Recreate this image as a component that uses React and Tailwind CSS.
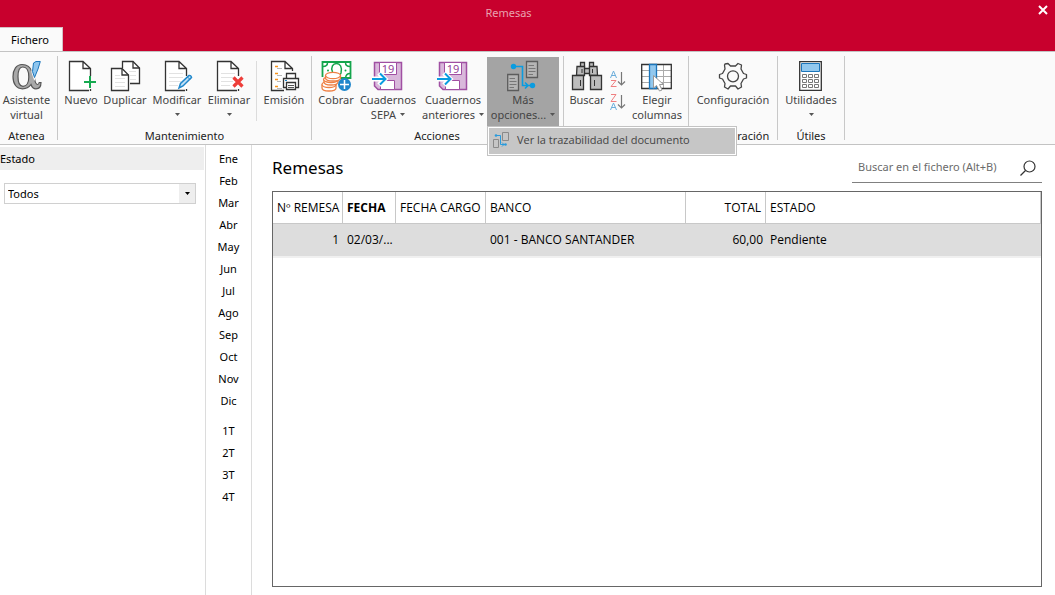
import React from "react";

const Svg = ({ children }) => (
  <svg width="32" height="32" viewBox="0 0 32 32" fill="none" className="shrink-0" aria-hidden="true">
    {children}
  </svg>
);

const DocShape = ({ lines }) => (
  <g>
    <path d="M4.500 1.500H18L25.500 9V30.500H4.500Z" fill="#fff" />
    <path d="M25.500 16V8.500L18 1.500H4.500V30.500H24M18 1.500V8.500H25.500M25.500 29V31" stroke="#333" strokeWidth="1.300" />
    {lines && <path d="M8 13.500H22M8 17.500H22M8 21.500H20M8 25.500H17" stroke="#e2e2e2" />}
  </g>
);

const AssistantIcon = () => (
  <Svg>
    <path
      fillRule="evenodd"
      d="M11 4.500C16 4.500 19.500 7 21 12L22.500 5H27C26 11 24.500 15.500 23.500 18C24 22 24.800 24.500 26.500 24.500C27.800 24.500 28 23.500 28.200 22.500H30C30 26.500 28 28.800 25 28.800C22.500 28.800 20.800 27 20 24.500C18 27.300 15 28.800 11.500 28.800C5.500 28.800 2 24 2 16.800C2 9.500 5.500 4.500 11 4.500ZM11.800 7C8.500 7 7 10.500 7 16.500C7 22.500 8.500 26.300 12 26.300C15.500 26.300 17.800 22.500 17.800 17C17.800 10.500 15.500 7 11.800 7Z"
      fill="#a9a9a9"
      stroke="#555"
      strokeWidth="1.200"
    />
    <path d="M22.500 3L25 1.500H29.300L27 9L23.500 17.500L21.500 11.500Z" fill="#8fc6ee" stroke="#fafafa" strokeWidth="2.500" />
    <path d="M22.500 3L25 1.500H29.300L27 9L23.500 17.500L21.500 11.500Z" fill="#8fc6ee" stroke="#1c76bb" />
  </Svg>
);

const NewIcon = () => (
  <Svg>
    <DocShape />
    <path d="M25 16V28M19 22H31" stroke="#16a94f" strokeWidth="2" />
  </Svg>
);

const DuplicateIcon = () => (
  <Svg>
    <path d="M13.500 8V1.500H24L30.500 8V23.500H21" fill="#fff" stroke="#333" strokeWidth="1.300" />
    <path d="M24 1.500V8H30.500" stroke="#333" strokeWidth="1.300" />
    <path d="M20 11.500H27M21 15.500H27M21 19.500H27" stroke="#e2e2e2" />
    <path d="M2.500 8.500H13L19.500 15V30.500H2.500Z" fill="#fff" stroke="#333" strokeWidth="1.300" />
    <path d="M13 8.500V15H19.500" stroke="#333" strokeWidth="1.300" />
    <path d="M6 15.500H11M6 18.500H16M6 22.500H16M6 26.500H16" stroke="#e2e2e2" />
  </Svg>
);

const EditIcon = () => (
  <Svg>
    <DocShape lines />
    <path d="M18 28L19.500 23.500L28 15.500Q30 15 30.500 17.500L22 26Z" fill="#bfdff5" stroke="#2087cb" strokeWidth="1.500" />
    <path d="M26.500 17L29 19.500" stroke="#2087cb" />
  </Svg>
);

const DeleteIcon = () => (
  <Svg>
    <DocShape lines />
    <path d="M20.500 17.500L29.500 26.500M29.500 17.500L20.500 26.500" stroke="#ee3e3a" strokeWidth="3.200" />
  </Svg>
);

const PrintIcon = () => (
  <Svg>
    <path d="M3.500 1.500H17L24.500 8.500V14H16V30.500H3.500Z" fill="#fff" />
    <path d="M16 30.500H3.500V1.500H17L24.500 8.500V11M17 1.500V8.500H24.500" stroke="#333" strokeWidth="1.300" />
    <path d="M7 6.500H10M7 13.500H10M7 19.500H10M7 26.500H10" stroke="#f7941d" strokeWidth="1.500" />
    <path d="M9 8.500H14M9 15.500H14M9 21.500H13M9 28.500H14" stroke="#b9b9b9" />
    <path d="M18.500 19V13.500H27.500V19" fill="#fff" stroke="#333" strokeWidth="1.300" />
    <path d="M15.500 18.500H30.500V27.500H15.500Z" fill="#fff" stroke="#333" strokeWidth="1.300" />
    <path d="M18.500 22.500H27.500V29.500H18.500Z" fill="#fff" stroke="#333" strokeWidth="1.300" />
    <path d="M20 25.500H26M20 27.500H26" stroke="#555" />
    <path d="M17 20.500H19" stroke="#2087cb" />
  </Svg>
);

const CashIcon = () => (
  <Svg>
    <path d="M2.500 17V2H30.500V18H19" fill="#fff" stroke="#14a54c" strokeWidth="1.800" />
    <path d="M3 6.500Q7.500 6.500 7.500 2.500M25.500 2.500Q25.500 6.500 30 6.500M30 13.500Q26 13.500 25.500 18" stroke="#14a54c" strokeWidth="1.500" />
    <path d="M12.500 12C10.500 7 13 3.500 16.500 3.500S22.500 7 21 13L19.500 16" stroke="#14a54c" strokeWidth="1.500" />
    <circle cx="8" cy="10.500" r="1" fill="#14a54c" />
    <circle cx="25.500" cy="10.500" r="1" fill="#14a54c" />
    <g fill="#fff" stroke="#ee8045" strokeWidth="1.300">
      <path d="M2 24.500V28C2 32 16 32 16 28V24.500" />
      <ellipse cx="9" cy="24.500" rx="7" ry="3" />
      <path d="M4 19.500V22C4 26 18 26 18 22V19.500" />
      <ellipse cx="11" cy="19.500" rx="7.500" ry="3" />
      <path d="M5.500 15.500V18C5.500 22 20.500 22 20.500 18V15.500" />
      <ellipse cx="13" cy="15.500" rx="7.500" ry="3.200" />
    </g>
    <circle cx="24.500" cy="24.500" r="6.500" fill="#2087cb" />
    <path d="M24.500 20V29M20 24.500H29" stroke="#fff" strokeWidth="1.500" />
  </Svg>
);

const LedgerIcon = () => (
  <Svg>
    <path d="M2.500 2.500H29.500V29.500H6L2.500 26Z" fill="#d9b8db" stroke="#a04fa2" strokeWidth="1.500" />
    <path d="M7.500 2.500H24.500V14.500H7.500Z" fill="#fff" stroke="#a04fa2" />
    <path d="M8.500 20.500H22.500V29.500H8.500Z" fill="#fff" stroke="#a04fa2" />
    <path d="M0 19H12M7 13L13 19L7 25" stroke="#fff" strokeWidth="5" />
    <text x="16" y="12.500" textAnchor="middle" fontSize="11" fontFamily="Noto Sans, sans-serif" fill="#93439a">19</text>
    <path d="M0 19H13M8 13.500L13.500 19L8 24.500" stroke="#0a9ce0" strokeWidth="2" />
  </Svg>
);

const TraceIcon = () => (
  <Svg>
    <g fill="#b5b5b5" stroke="#5c5c5c" strokeWidth="1.300">
      <path d="M0.700 14.500H11.500V30.500H0.700Z" />
      <path d="M19.500 1.500H30.500V17.500H19.500Z" />
    </g>
    <path d="M2.500 18.500H8M2.500 21.500H9.500M2.500 24.500H9.500M2.500 27.500H7M21.500 5.500H27M21.500 8.500H28.500M21.500 11.500H28.500M21.500 14.500H26" stroke="#777" />
    <path d="M6 6.500H15.500V25.500H25M18 22.500L21 25.500L18 28.500" stroke="#0a9ce0" strokeWidth="1.600" />
    <circle cx="6.500" cy="6.500" r="2.700" fill="#0a9ce0" />
    <circle cx="25.500" cy="25.500" r="2.700" fill="#0a9ce0" />
  </Svg>
);

const TraceSmallIcon = () => (
  <svg width="16" height="16" viewBox="0 0 16 16" fill="none" className="shrink-0" aria-hidden="true">
    <path d="M0.500 7.500H5.500V15.500H0.500ZM9.500 0.500H15.500V8.500H9.500Z" stroke="#8a8a8a" />
    <path d="M3 3.500H7.500V12.500H12M9 10.500L11 12.500L9 14.500" stroke="#2a9bdc" />
    <circle cx="3" cy="3.500" r="1.300" fill="#2a9bdc" />
    <circle cx="12.500" cy="12.500" r="1.300" fill="#2a9bdc" />
  </svg>
);

const BinocularsIcon = () => (
  <Svg>
    <g fill="#bdbdbd" stroke="#333" strokeWidth="1.300">
      <path d="M9.500 2.500H13.500V7H9.500ZM18.500 2.500H22.500V7H18.500ZM13 8.500H19V13.500H13Z" />
      <path d="M6 6.500H13.500V15.500H5.500ZM18.500 6.500H26L26.500 15.500H18.500Z" />
      <path d="M1.500 15.500H12.500V29.500H1.500ZM19.500 15.500H30.500V29.500H19.500Z" />
    </g>
    <path d="M9.500 20V26M23.500 20V26M11 9V13M21.500 9V13" stroke="#333" />
  </Svg>
);

const SortIcon = ({ descending }) => (
  <svg width="16" height="18" viewBox="0 0 16 18" fill="none" aria-hidden="true">
    <path d={descending ? "M0.500 17L3.500 10L6.500 17M1.500 14.500H5.500" : "M0.500 8L3.500 1L6.500 8M1.500 5.500H5.500"} stroke="#6caedb" />
    <path d={descending ? "M1 1.500H6L1 8.500H6.500" : "M1 10.500H6L1 16.500H6.500"} stroke="#ef7f80" />
    <path d="M11.500 2V15M8 11.500L11.500 15L15 11.500" stroke="#777" strokeWidth="1.200" />
  </svg>
);

const ColumnsIcon = () => (
  <Svg>
    <path d="M1 4.500H30V28.500H1Z" fill="#fff" />
    <path d="M1 10.500H30M1 16.500H30M1 22.500H30M15.500 4V28M22.500 4V28" stroke="#ababab" />
    <path d="M0.700 4.500H30.300V28.500H0.700Z" stroke="#333" strokeWidth="1.300" />
    <path d="M8.500 4.500H15.500V28.500H8.500Z" fill="#92c8ee" stroke="#1c76bb" strokeWidth="1.300" />
    <path d="M12.500 15.500V28L15.500 25.500L18.500 31L21 30L18.500 24.500H22.500Z" fill="#fff" stroke="#999" />
  </Svg>
);

const GearIcon = () => (
  <Svg>
    <g stroke="#444" strokeWidth="1.300" strokeLinejoin="round">
      <path d="M8 4L11 3.500L13.500 6H18.500L21 3.500L24.500 5L24 9L26.500 13.500L29.500 14.500V18L26.500 19L24 23.500L24.500 27L21 29L18.500 26H13.500L11 29L7.500 27L8 23.500L5.500 19L2.500 18V14.500L5.500 13.500L8 9L7.500 5Z" />
      <circle cx="16" cy="16.300" r="5.500" />
    </g>
  </Svg>
);

const CalculatorIcon = () => (
  <Svg>
    <path d="M4.700 1.700H26.300V30.300H4.700Z" fill="#fff" stroke="#333" strokeWidth="1.300" />
    <path d="M6.500 3.500H24.500V11.500H6.500Z" fill="#92c8ee" stroke="#1c76bb" />
    <path d="M7.500 14.500H11.500V17.500H7.500ZM13.500 14.500H17.500V17.500H13.500ZM19.500 14.500H23.500V17.500H19.500ZM7.500 19.500H11.500V22.500H7.500ZM13.500 19.500H17.500V22.500H13.500ZM19.500 19.500H23.500V22.500H19.500ZM7.500 24.500H11.500V27.500H7.500ZM13.500 24.500H17.500V27.500H13.500ZM19.500 24.500H23.500V27.500H19.500Z" stroke="#777" />
  </Svg>
);

const Caret = () => (
  <svg width="5" height="3" viewBox="0 0 5 3" className="shrink-0" aria-hidden="true">
    <path d="M0 0H5L2.500 3Z" fill="#555" />
  </svg>
);

function RibbonButton({ icon, label, second, caret, width, active }) {
  return (
    <button
      type="button"
      className={`${width} ${active ? "bg-[#a4a4a4]" : ""} flex h-[69px] shrink-0 flex-col items-center pt-[3px] leading-[15px] whitespace-nowrap text-[#444]`}
    >
      {icon}
      <span>{label}</span>
      <span className="flex h-[15px] items-center gap-1">
        {second}
        {caret && <Caret />}
      </span>
    </button>
  );
}

function Group({ title, className, children }) {
  return (
    <section className={`${className} flex h-[84px] shrink-0 flex-col border-r border-[#c8c8c8]`}>
      <div className="flex pt-px">{children}</div>
      <h2 className="mt-0.5 text-center leading-4 text-[#222]">{title}</h2>
    </section>
  );
}

function Ribbon() {
  return (
    <div className="flex h-[94px] border-t border-b border-[#c3c3c3] bg-[#fafafa] pt-1">
      <Group title="Atenea" className="pr-1">
        <RibbonButton icon={<AssistantIcon />} label="Asistente" second="virtual" width="w-[53px]" />
      </Group>
      <Group title="Mantenimiento" className="px-[3px]">
        <RibbonButton icon={<NewIcon />} label="Nuevo" width="w-10" />
        <RibbonButton icon={<DuplicateIcon />} label="Duplicar" width="w-12" />
        <RibbonButton icon={<EditIcon />} label="Modificar" caret width="w-14" />
        <RibbonButton icon={<DeleteIcon />} label="Eliminar" caret width="w-12" />
        <div className="mx-[3px] mt-1 h-[60px] w-px bg-[#dcdcdc]" />
        <RibbonButton icon={<PrintIcon />} label="Emisión" width="w-12" />
      </Group>
      <Group title="Acciones" className="pr-1 pl-[3px]">
        <RibbonButton icon={<CashIcon />} label="Cobrar" width="w-[42px]" />
        <RibbonButton icon={<LedgerIcon />} label="Cuadernos" second="SEPA" caret width="w-[62px]" />
        <RibbonButton icon={<LedgerIcon />} label="Cuadernos" second="anteriores" caret width="w-[68px]" />
        <div className="relative">
          <RibbonButton icon={<TraceIcon />} label="Más" second="opciones..." caret active width="w-[72px]" />
          <div role="menu" className="absolute top-full left-0 z-10 w-[250px] border border-[#c3c3c3] bg-white p-px">
            <button type="button" role="menuitem" className="flex h-[26px] w-full items-start gap-2 bg-[#c6c6c6] pt-1 pl-1 font-['Open_Sans','Noto_Sans',sans-serif] text-[11px] leading-4 whitespace-nowrap text-[#444]">
              <TraceSmallIcon />
              Ver la trazabilidad del documento
            </button>
          </div>
        </div>
      </Group>
      <Group className="px-[3px]">
        <RibbonButton icon={<BinocularsIcon />} label="Buscar" width="w-10" />
        <div className="flex w-[22px] flex-col items-center gap-[5px] pt-[13px]">
          <button type="button" aria-label="Orden ascendente"><SortIcon /></button>
          <button type="button" aria-label="Orden descendente"><SortIcon descending /></button>
        </div>
        <RibbonButton icon={<ColumnsIcon />} label="Elegir" second="columnas" width="w-14" />
      </Group>
      <Group title="Configuración">
        <RibbonButton icon={<GearIcon />} label="Configuración" width="w-[88px]" />
      </Group>
      <Group title="Útiles">
        <RibbonButton icon={<CalculatorIcon />} label="Utilidades" caret width="w-[66px]" />
      </Group>
    </div>
  );
}

const months = ["Ene", "Feb", "Mar", "Abr", "May", "Jun", "Jul", "Ago", "Sep", "Oct", "Nov", "Dic"];
const quarters = ["1T", "2T", "3T", "4T"];

const PeriodList = ({ items }) => (
  <div className="flex flex-col">
    {items.map((item) => (
      <button key={item} type="button" className="h-[22px] text-center">{item}</button>
    ))}
  </div>
);

function RemesasTable() {
  const th = "border-r border-b border-[#c8c8c8] px-1 whitespace-nowrap";
  return (
    <table className="w-full table-fixed border-separate border-spacing-0 font-['Open_Sans','Noto_Sans',sans-serif] text-xs">
      <colgroup>
        <col className="w-[70px]" />
        <col className="w-[53px]" />
        <col className="w-[90px]" />
        <col className="w-[200px]" />
        <col className="w-[80px]" />
        <col />
      </colgroup>
      <thead>
        <tr className="h-8 text-left">
          <th className={`${th} text-right font-normal`}>Nº REMESA</th>
          <th className={`${th} font-bold`}>FECHA</th>
          <th className={`${th} font-normal`}>FECHA CARGO</th>
          <th className={`${th} font-normal`}>BANCO</th>
          <th className={`${th} text-right font-normal`}>TOTAL</th>
          <th className={`${th} font-normal`}>ESTADO</th>
        </tr>
      </thead>
      <tbody>
        <tr className="h-8 bg-[#ddd]">
          <td className="px-1 text-right">1</td>
          <td className="px-1 whitespace-nowrap">02/03/...</td>
          <td />
          <td className="px-1">001 - BANCO SANTANDER</td>
          <td className="pr-[3px] text-right">60,00</td>
          <td className="px-1">Pendiente</td>
        </tr>
      </tbody>
    </table>
  );
}

export default function App() {
  return (
    <div className="flex min-h-screen flex-col bg-white font-['Noto_Sans','Open_Sans',sans-serif] text-[11px] text-black">
      <header className="bg-[#c8002d]">
        <div className="flex h-[27px] items-center">
          <h1 className="flex-1 text-center text-[#e9a3b0]">Remesas</h1>
          <button type="button" aria-label="Cerrar" className="mr-1.5 mb-2 ml-5 flex size-3 items-center justify-center">
            <svg width="10" height="10" viewBox="0 0 10 10" aria-hidden="true">
              <path d="M1 1L9 9M9 1L1 9" stroke="#fff" strokeWidth="2" />
            </svg>
          </button>
        </div>
        <nav className="flex">
          <button type="button" className="-mb-px h-[25px] w-[63px] border-t border-r border-[#d5c0c4] bg-[#fafafa] pr-0.5">Fichero</button>
        </nav>
      </header>
      <Ribbon />
      <div className="flex flex-1">
        <aside className="w-[205px] shrink-0 pt-0.5">
          <label htmlFor="estado" className="mr-px block h-[23px] bg-[#eee] leading-[23px]">Estado</label>
          <div className="relative mt-[13px] mr-[9px] ml-1">
            <select id="estado" className="block h-[21px] w-full appearance-none border border-[#d0d0d0] bg-white pl-[3px] leading-[19px]">
              <option>Todos</option>
            </select>
            <span className="pointer-events-none absolute inset-y-px right-px flex w-4 items-center justify-center bg-[#eee]">
              <svg width="5" height="3" viewBox="0 0 5 3" aria-hidden="true"><path d="M0 0H5L2.500 3Z" fill="#000" /></svg>
            </span>
          </div>
        </aside>
        <nav className="flex w-[47px] shrink-0 flex-col gap-2 border-x border-[#dcdcdc] pt-[3px]">
          <PeriodList items={months} />
          <PeriodList items={quarters} />
        </nav>
        <main className="flex min-w-0 flex-1 flex-col pr-[13px] pb-2 pl-5">
          <div className="flex h-[46px] justify-between">
            <h2 className="pt-[11px] text-[17px] leading-6">Remesas</h2>
            <div className="mt-2 flex h-[30px] w-[190px] items-center border-b border-[#808080] pr-1.5 pl-1.5">
              <input aria-label="Buscar en el fichero" placeholder="Buscar en el fichero (Alt+B)" className="min-w-0 flex-1 outline-none placeholder:text-[#6b6b6b]" />
              <button type="button" aria-label="Buscar">
                <svg width="16" height="16" viewBox="0 0 16 16" fill="none" stroke="#333" strokeWidth="1.200" aria-hidden="true">
                  <circle cx="9.500" cy="6.500" r="5.500" />
                  <path d="M5.500 10.500L0.500 15.500" />
                </svg>
              </button>
            </div>
          </div>
          <div className="flex-1 border border-[#666]">
            <RemesasTable />
            <div className="h-0.5 bg-[#f0f0f0]" />
          </div>
        </main>
      </div>
    </div>
  );
}
